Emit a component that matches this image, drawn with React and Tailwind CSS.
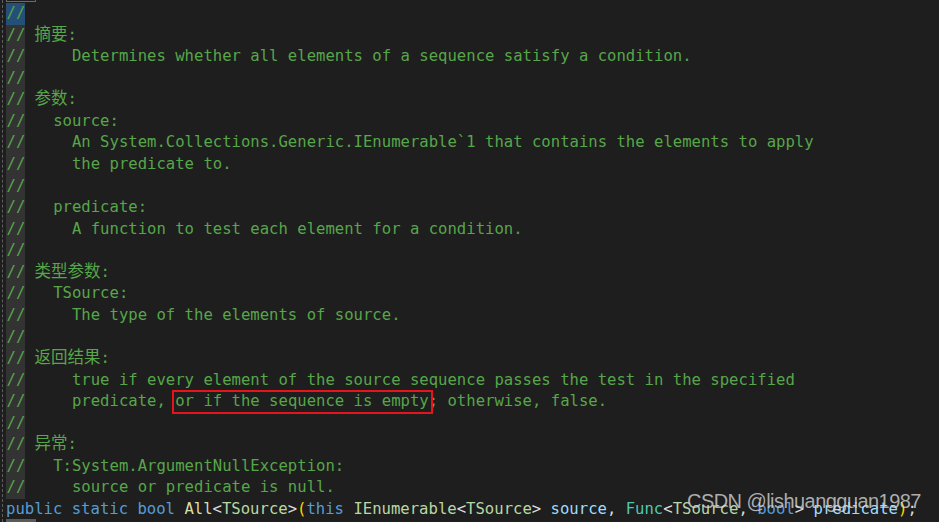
const lines = [
  "//",
  "// {摘要}:",
  "//     Determines whether all elements of a sequence satisfy a condition.",
  "//",
  "// {参数}:",
  "//   source:",
  "//     An System.Collections.Generic.IEnumerable`1 that contains the elements to apply",
  "//     the predicate to.",
  "//",
  "//   predicate:",
  "//     A function to test each element for a condition.",
  "//",
  "// {类型参数}:",
  "//   TSource:",
  "//     The type of the elements of source.",
  "//",
  "// {返回结果}:",
  "//     true if every element of the source sequence passes the test in the specified",
  "//     predicate, [or if the sequence is empty]; otherwise, false.",
  "//",
  "// {异常}:",
  "//   T:System.ArgumentNullException:",
  "//     source or predicate is null.",
];

const mono = "font-['DejaVu_Sans_Mono',monospace] text-[15.6px]";

function CommentText({ text }) {
  // {..} marks CJK words, [..] marks the boxed part
  const parts = text.split(/(\{[^}]+\}|\[[^\]]+\])/);
  return parts.map((part, i) => {
    if (part.startsWith("{")) {
      return (
        <span key={i} className="font-['Noto_Sans_CJK_SC',sans-serif] text-[16.5px] leading-none">
          {part.slice(1, -1)}
        </span>
      );
    }
    if (part.startsWith("[")) {
      return (
        <span key={i} className="relative">
          <span className="absolute -left-[3px] -right-[4px] -top-[2px] -bottom-[4px] border-2 border-[#e8141c]" />
          {part.slice(1, -1)}
        </span>
      );
    }
    return <span key={i}>{part}</span>;
  });
}

function CommentLine({ text, first }) {
  const rest = text.slice(2);
  return (
    <div className="flex h-[21.57px] items-center whitespace-pre text-[#57a64a]">
      <span className={`pl-[0.5px] w-[19px] h-full flex items-center ${first ? "bg-[#264f78]" : "bg-[#333333]"}`}>//</span>
      <span>
        <CommentText text={rest} />
      </span>
    </div>
  );
}

export default function App() {
  return (
    <div className="relative w-[939px] h-[522px] overflow-hidden bg-[#1e1e1e]">
      <div className="absolute left-[2px] top-0 bottom-0 border-l border-dashed border-[#5e5e5e]" />
      <div className="absolute left-[6px] top-[-20px] w-[30px] h-[22px] border border-[#6a6a6a]" />
      <div className="absolute left-[6px] top-[519px] w-[30px] h-[3px] bg-[#5a5a5a]" />

      <div className={`pt-[3px] pl-[6px] ${mono}`}>
        {lines.map((line, i) => (
          <CommentLine key={i} text={line} first={i === 0} />
        ))}
        <div className="flex h-[21.57px] items-center whitespace-pre text-[#dcdcdc]">
          <span className="text-[#569cd6]">public static bool </span>
          <span className="text-[#dcdcaa]">All</span>
          <span>&lt;</span>
          <span className="text-[#b8d7a3]">TSource</span>
          <span>&gt;</span>
          <span className="text-[#ffd700]">(</span>
          <span className="text-[#569cd6]">this </span>
          <span className="text-[#b8d7a3]">IEnumerable</span>
          <span>&lt;</span>
          <span className="text-[#b8d7a3]">TSource</span>
          <span>&gt; </span>
          <span className="text-[#9cdcfe]">source</span>
          <span>, </span>
          <span className="text-[#4ec9b0]">Func</span>
          <span>&lt;</span>
          <span className="text-[#b8d7a3]">TSource</span>
          <span>, </span>
          <span className="text-[#569cd6]">bool</span>
          <span>&gt; </span>
          <span className="text-[#9cdcfe]">predicate</span>
          <span className="text-[#ffd700]">)</span>
          <span>;</span>
        </div>
      </div>

      <div className="absolute left-[687px] top-[489px] font-['Liberation_Sans',sans-serif] text-[20px] leading-[24px] tracking-[-0.55px] text-[rgba(215,215,215,0.78)] whitespace-pre">
        CSDN @lishuangguan1987
      </div>
    </div>
  );
}
